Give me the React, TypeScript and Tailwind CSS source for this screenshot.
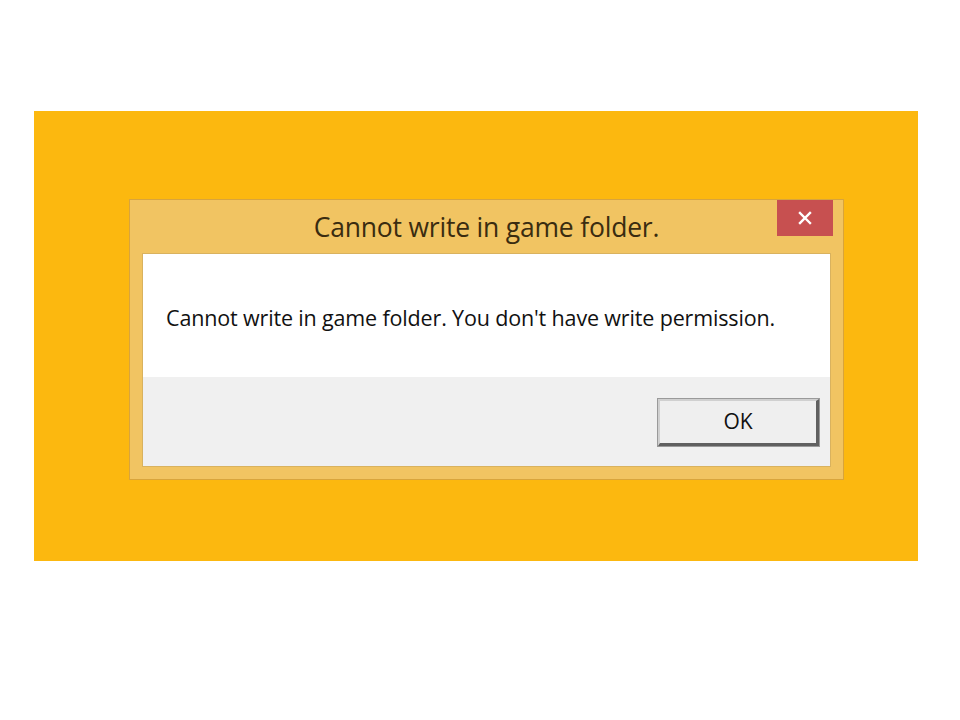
export default function App() {
  return (
    <div className="w-[960px] h-[720px] bg-white pt-[111px] pl-[34px]" style={{ fontFamily: '"Open Sans", "Noto Sans", sans-serif' }}>
      <div className="w-[884px] h-[450px] bg-[#fcb80f] pt-[88px] pl-[95px]">
        <div className="w-[715px] h-[281px] bg-[#f1c462] border border-[#d8a43c] flex flex-col">
          <div className="h-[53px] relative flex items-center justify-center">
            <span className="text-[26.5px] leading-none text-[#3a2c10] tracking-[-0.2px] mt-[1px]">Cannot write in game folder.</span>
            <button className="absolute top-0 right-[10px] w-[56px] h-[36px] bg-[#c75050] flex items-center justify-center">
              <svg width="14" height="14" viewBox="0 0 14 14">
                <path d="M2 2 L12 12 M12 2 L2 12" stroke="white" strokeWidth="2.4" strokeLinecap="square" />
              </svg>
            </button>
          </div>
          <div className="mx-[12px] border border-[#d9b25e] flex flex-col">
            <div className="h-[123px] bg-white pl-[23px] pt-[48px]">
              <p className="text-[21.5px] leading-[32px] text-[#111] tracking-[-0.15px]">Cannot write in game folder. You don't have write permission.</p>
            </div>
            <div className="h-[89px] bg-[#f0f0f0] flex items-start justify-end pr-[11px] pt-[22px]">
              <button className="w-[161px] h-[47px] bg-[#efefef] border-t-2 border-l-2 border-r-[3px] border-b-[3px] border-t-[#d0d0d0] border-l-[#d0d0d0] border-r-[#606060] border-b-[#606060] outline outline-1 outline-[#9a9a9a] text-[21px] text-[#111] flex items-center justify-center">
                OK
              </button>
            </div>
          </div>
        </div>
      </div>
    </div>
  );
}
